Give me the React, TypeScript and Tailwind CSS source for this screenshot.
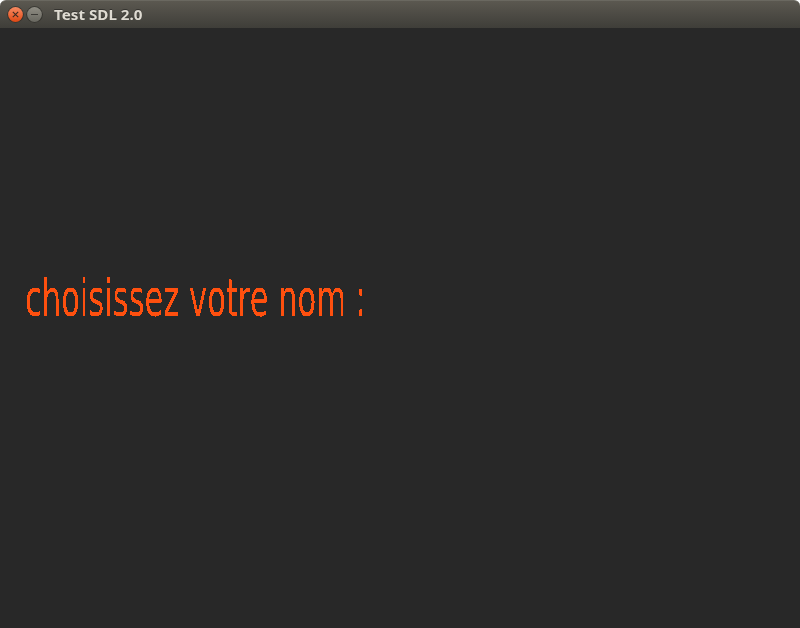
import React from 'react';

function CloseButton() {
  return (
    <svg className="block size-[18px]" viewBox="0 0 18 18" aria-label="Close">
      <defs>
        <linearGradient id="closeFill" x1="0" y1="0" x2="0" y2="1">
          <stop offset="0" stopColor="#f58a62" />
          <stop offset="0.5" stopColor="#ef6b3c" />
          <stop offset="1" stopColor="#dd4814" />
        </linearGradient>
      </defs>
      <circle cx="9.5" cy="8.5" r="8.3" fill="#33322d" />
      <circle cx="9.5" cy="8.5" r="7.4" fill="url(#closeFill)" />
      <path d="M6.8 5.8l5.4 5.4M12.2 5.8l-5.4 5.4" stroke="#3c2b22" strokeWidth="1.1" />
    </svg>
  );
}

function MinimizeButton() {
  return (
    <svg className="block size-[18px]" viewBox="0 0 18 18" aria-label="Minimize">
      <defs>
        <linearGradient id="minFill" x1="0" y1="0" x2="0" y2="1">
          <stop offset="0" stopColor="#8f8d84" />
          <stop offset="1" stopColor="#696860" />
        </linearGradient>
      </defs>
      <circle cx="9.5" cy="8.5" r="8.3" fill="#33322d" />
      <circle cx="9.5" cy="8.5" r="7.4" fill="url(#minFill)" />
      <path d="M6 8.5h7" stroke="#3c3b37" strokeWidth="1" />
    </svg>
  );
}

function TitleBar() {
  return (
    <header className="flex h-7 shrink-0 items-center rounded-t-[6px] border-t border-[#6a6860] bg-linear-to-b from-[#5b5850] to-[#3f3e39] pl-1.5">
      <div className="flex gap-px">
        <CloseButton />
        <MinimizeButton />
      </div>
      <h1 className="ml-[11px] origin-left scale-x-[1.085] whitespace-nowrap font-['Noto_Sans','Open_Sans',sans-serif] text-[14px] leading-[20px] font-bold text-[#dfdbd2] [text-shadow:0_-1px_0_#33322e]">
        Test SDL 2.0
      </h1>
    </header>
  );
}

export default function App() {
  return (
    <div className="flex h-[628px] w-[800px] flex-col overflow-hidden bg-white">
      <TitleBar />
      <main className="flex-1 bg-[#282828] pt-[241px] pl-[25px]">
        <svg className="hidden">
          <filter id="crisp" x="0" y="0" width="1" height="1">
            <feComponentTransfer>
              <feFuncA type="discrete" tableValues="0 1" />
            </feComponentTransfer>
          </filter>
        </svg>
        <div className="w-[400px] filter-[url(#crisp)]">
          <p className="w-max origin-top-left scale-x-[0.599] whitespace-nowrap font-['DejaVu_Sans',sans-serif] text-[51px] leading-[60px] text-[#ff500f]">
            choisissez votre nom :
          </p>
        </div>
      </main>
    </div>
  );
}
